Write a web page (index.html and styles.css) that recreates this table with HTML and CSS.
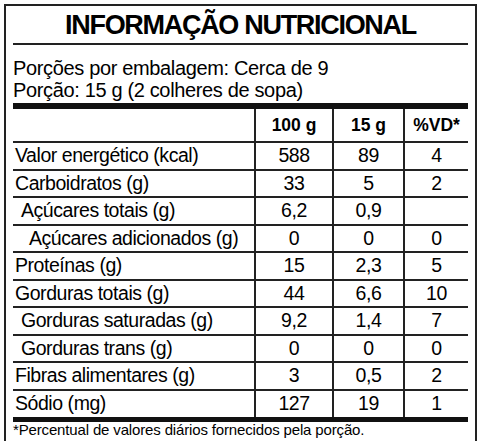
FILE: index.html
```html
<!DOCTYPE html>
<html lang="pt">
  <head>
    <meta charset="UTF-8" />
    <meta name="viewport" content="width=device-width, initial-scale=1.0" />
    <title>Informação Nutricional</title>
    <link rel="stylesheet" href="styles.css">
  </head>
  <body>
    <div class="label">
      <h1 class="title">INFORMAÇÃO NUTRICIONAL</h1>
      <div class="serving">
        <p>Porções por embalagem: Cerca de 9</p>
        <p>Porção: 15 g (2 colheres de sopa)</p>
      </div>

      <div class="facts">
        <div class="row head">
          <span class="name"></span><span>100 g</span><span>15 g</span><span>%VD*</span>
        </div>
        <div class="row">
          <span class="name">Valor energético (kcal)</span><span>588</span><span>89</span><span>4</span>
        </div>
        <div class="row">
          <span class="name">Carboidratos (g)</span><span>33</span><span>5</span><span>2</span>
        </div>
        <div class="row">
          <span class="name sub">Açúcares totais (g)</span><span>6,2</span><span>0,9</span><span></span>
        </div>
        <div class="row">
          <span class="name subsub">Açúcares adicionados (g)</span><span>0</span><span>0</span><span>0</span>
        </div>
        <div class="row">
          <span class="name">Proteínas (g)</span><span>15</span><span>2,3</span><span>5</span>
        </div>
        <div class="row">
          <span class="name">Gorduras totais (g)</span><span>44</span><span>6,6</span><span>10</span>
        </div>
        <div class="row">
          <span class="name sub">Gorduras saturadas (g)</span><span>9,2</span><span>1,4</span><span>7</span>
        </div>
        <div class="row">
          <span class="name sub">Gorduras trans (g)</span><span>0</span><span>0</span><span>0</span>
        </div>
        <div class="row">
          <span class="name">Fibras alimentares (g)</span><span>3</span><span>0,5</span><span>2</span>
        </div>
        <div class="row last">
          <span class="name">Sódio (mg)</span><span>127</span><span>19</span><span>1</span>
        </div>
      </div>

      <p class="note">*Percentual de valores diários fornecidos pela porção.</p>
    </div>
  </body>
</html>
```

FILE: styles.css
```css
html,
body {
  overflow: hidden;
}
body {
  margin: 0;
  padding: 4px;
  font-family: "Liberation Sans", Arial, sans-serif;
  color: #000;
  background: #fff;
}
.label {
  width: 473px;
  box-sizing: border-box;
  border: 2px solid #222;
  padding: 0 7px 30px;
}
.title {
  margin: 0;
  padding-top: 2px;
  line-height: 35px;
  font-size: 27px;
  font-weight: bold;
  letter-spacing: -1.3px;
  text-align: center;
  border-bottom: 2px solid #222;
}
.serving {
  padding-top: 12px;
}
.serving p {
  margin: 0;
  font-size: 20px;
  line-height: 22px;
  letter-spacing: -0.35px;
}
.facts {
  margin-top: 2px;
  border-top: 6px solid #111;
  border-bottom: 5px solid #111;
}
.row {
  display: grid;
  grid-template-columns: 241px 78px 71px 65px;
  height: 27.5px;
  box-sizing: border-box;
  border-bottom: 2px solid #222;
  font-size: 19.5px;
  letter-spacing: -0.45px;
}
.row span {
  display: flex;
  align-items: center;
  justify-content: center;
  border-left: 2px solid #222;
}
.row .name {
  justify-content: flex-start;
  padding-left: 2px;
  border-left: none;
}
.row .sub {
  padding-left: 8px;
}
.row .subsub {
  padding-left: 16px;
}
.head {
  height: 34px;
  font-size: 17.5px;
  font-weight: bold;
  letter-spacing: 0;
}
.last {
  height: 26.5px;
  border-bottom: none;
}
.note {
  margin: 0;
  font-size: 15px;
  line-height: 16px;
  letter-spacing: -0.15px;
}
```
